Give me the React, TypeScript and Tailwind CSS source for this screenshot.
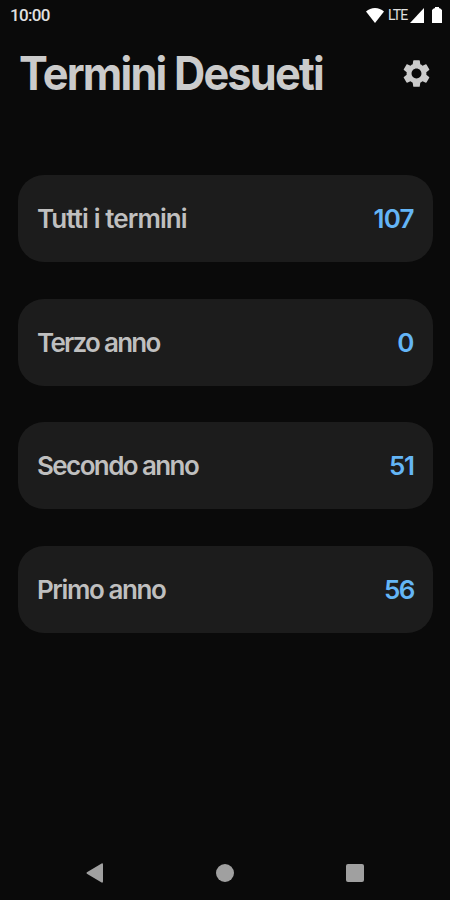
import { MdSettings } from "react-icons/md";

interface Category {
  label: string;
  count: number;
  labelClass: string;
  countClass: string;
}

const categories: Category[] = [
  { label: "Tutti i termini", count: 107, labelClass: "tracking-[-0.9px]", countClass: "tracking-[-0.9px]" },
  { label: "Terzo anno", count: 0, labelClass: "tracking-[-1.75px]", countClass: "tracking-[-1px]" },
  { label: "Secondo anno", count: 51, labelClass: "tracking-[-1.6px]", countClass: "tracking-[-1.4px]" },
  { label: "Primo anno", count: 56, labelClass: "tracking-[-1.4px]", countClass: "tracking-[-1.8px]" },
];

function StatusBar() {
  return (
    <div className="flex h-[30px] shrink-0 items-center justify-between pl-[10px] pr-2 font-['Roboto',sans-serif] text-white">
      <span className="text-[17px] font-medium leading-none tracking-[-0.7px] text-[#e0e0e0]">10:00</span>
      <div className="flex items-center">
        <svg className="h-[15px] w-[18px]" viewBox="0 0 18 15" fill="currentColor">
          <path d="M9 15 0 3.6C2.5 1.3 5.6 0 9 0s6.500 1.300 9 3.600z" />
        </svg>
        <span className="ml-1 w-[20px] text-[14px] leading-none tracking-[-0.9px] text-[#e0e0e0]">LTE</span>
        <svg className="ml-[2px] h-[15px] w-[14px]" viewBox="0 0 14 15" fill="currentColor">
          <path d="M14 0v15H0z" />
        </svg>
        <svg className="ml-[8px] h-4 w-[10px]" viewBox="0 0 10 16" fill="currentColor">
          <path d="M3 0h4v1.200h1L10 3v13H0V3l2-1.800h1z" />
        </svg>
      </div>
    </div>
  );
}

function CategoryCard({ label, count, labelClass, countClass }: Category) {
  return (
    <button className="flex h-[87px] shrink-0 items-center justify-between rounded-[26px] bg-[#1c1c1c] pl-[19px] pr-[19.500px] text-[26px] font-semibold">
      <span className={`whitespace-nowrap text-[#bfbfbf] ${labelClass}`}>{label}</span>
      <span className={`text-[#64b5f6] ${countClass}`}>{count}</span>
    </button>
  );
}

function NavigationBar() {
  return (
    <nav className="flex h-[54px] shrink-0 items-center justify-between pl-[86px] pr-[86px] text-[#a0a0a0]">
      <svg className="h-5 w-[17px]" viewBox="0 0 17 20" fill="currentColor">
        <path d="M15.600.4.900 9.200q-.9.800 0 1.600l14.700 8.800q1.400.4 1.400-1V1.400q0-1.400-1.400-1z" />
      </svg>
      <div className="size-[18px] rounded-full bg-current" />
      <div className="size-[18px] rounded-[2px] bg-current" />
    </nav>
  );
}

export default function App() {
  return (
    <main className="flex h-[900px] w-[450px] flex-col overflow-hidden bg-[#0a0a0a] font-['Inter',sans-serif]">
      <StatusBar />
      <header className="flex h-[87px] shrink-0 items-center justify-between pl-[19px] pr-[17px]">
        <h1 className="origin-left scale-x-[0.94] whitespace-nowrap pb-px text-[46px] font-bold leading-none tracking-[-1.9px] text-[#cbcbcb]">
          Termini Desueti
        </h1>
        <MdSettings className="size-[33px] shrink-0 text-[#cbcbcb]" />
      </header>
      <section className="mt-[58px] flex flex-1 flex-col gap-[36.600px] pl-[18px] pr-[17px]">
        {categories.map((category) => (
          <CategoryCard key={category.label} {...category} />
        ))}
      </section>
      <NavigationBar />
    </main>
  );
}
